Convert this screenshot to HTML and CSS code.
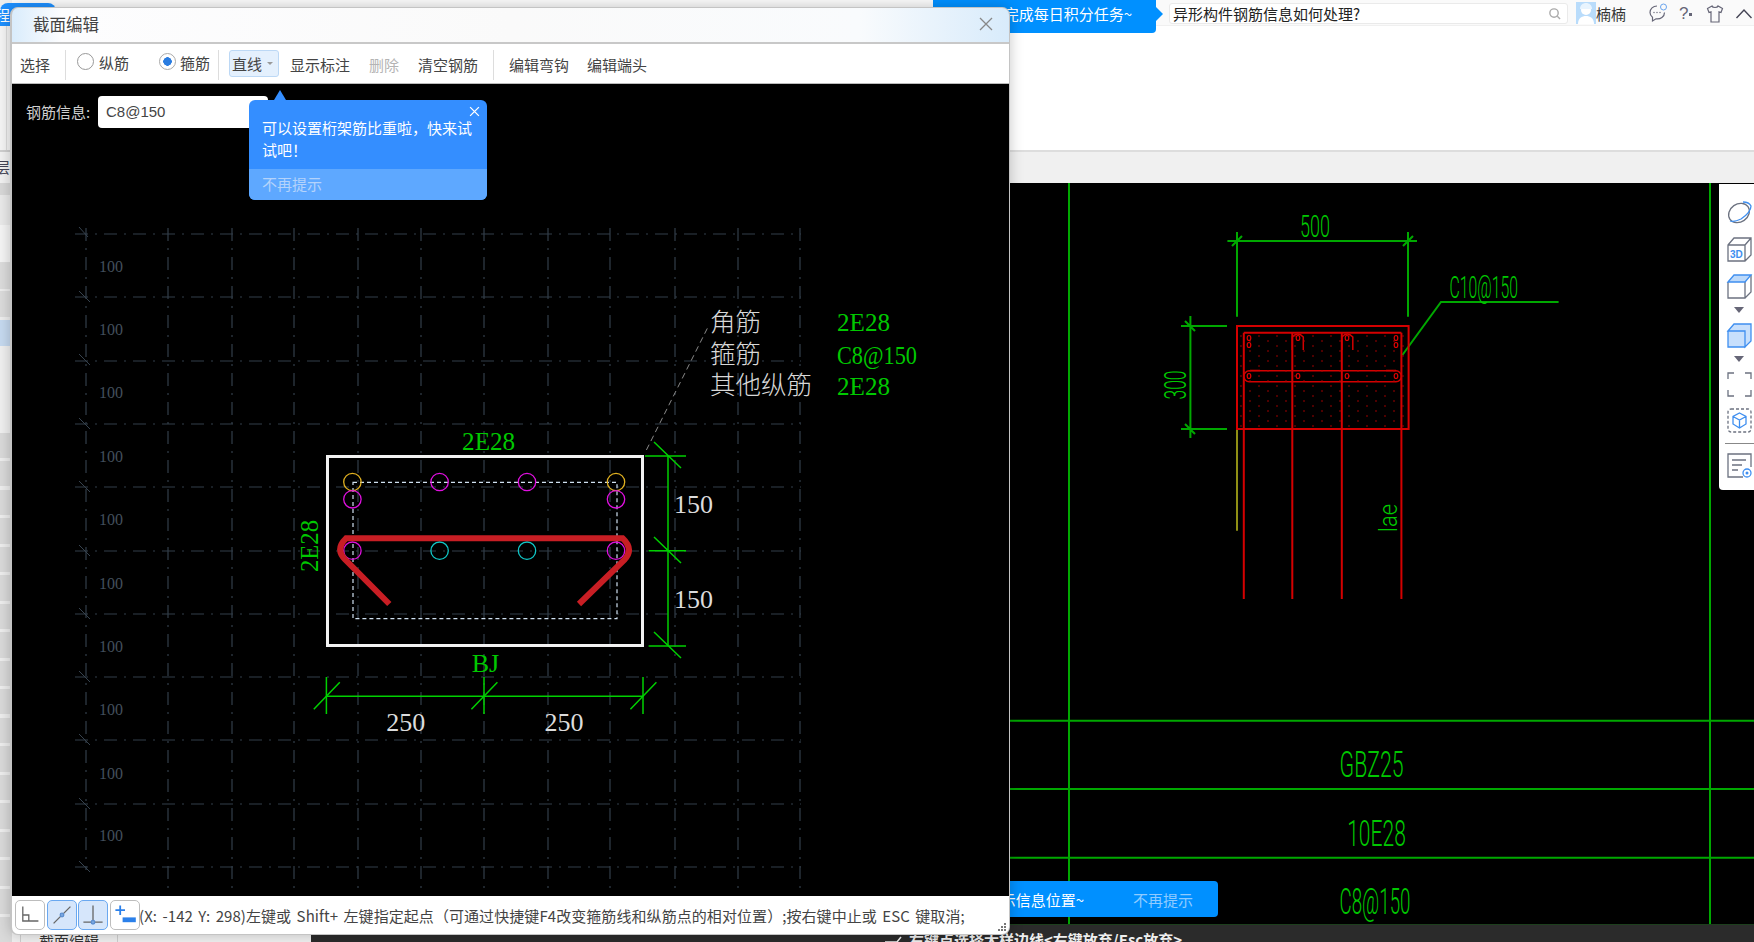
FILE: index.html
```html
<!DOCTYPE html>
<html lang="zh-CN">
<head>
<meta charset="utf-8">
<title>截面编辑</title>
<link rel="stylesheet" href="styles.css">
</head>
<body>
<div class="app">
  <aside class="side">
    <div class="side-top"></div>
    <div class="side-tab"><span>程</span></div>
    <div class="side-a"></div>
    <div class="side-b"><span>层</span></div>
    <div class="side-c"></div>
    <div class="side-d"></div>
    <div class="side-e"></div>
    <div class="side-f"></div>
    <div class="side-sel"></div>
    <div class="side-g"></div>
    <div class="side-rows"></div>
  </aside>

  <main class="main">
    <header class="top">
      <div class="top-row">
        <div class="promo"><span>请您及时完成每日积分任务~</span></div>
        <div class="search">
          <span>异形构件钢筋信息如何处理?</span>
          <svg class="search-ico" viewBox="0 0 14 14"><circle cx="6.500" cy="6.500" r="4.500"/><path d="M10 10l3 3"/></svg>
        </div>
        <svg class="avatar" viewBox="0 0 20 22"><rect width="20" height="22" fill="#b9dcfb"/><circle cx="10" cy="8" r="5" fill="#fff"/><path d="M2 22c0-6 4-8 8-8s8 2 8 8z" fill="#fff"/><path d="M4 7c0-4 3-6 6-6s6 2 6 6z" fill="#e8f4fe"/></svg>
        <span class="user">楠楠</span>
        <svg class="t-ico chat" viewBox="0 0 20 20"><path d="M9 3c-4 0-7 3-7 6.500 0 2 1 3.500 2.500 4.700V18l3.500-2.200c4.500.6 8.500-2 8.500-6.300"/><circle cx="6" cy="9.500" r=".7"/><circle cx="9" cy="9.500" r=".7"/><circle cx="12" cy="9.500" r=".7"/><circle class="chat-dot" cx="15.500" cy="4" r="3"/></svg>
        <span class="help">?</span><span class="help-caret"></span>
        <svg class="t-ico shirt" viewBox="0 0 18 20"><path d="M6 2L1.500 4.500 3 8.500l2-.7V18h8V7.800l2 .7 1.500-4L12 2c-.5 2-5.500 2-6 0z"/></svg>
        <svg class="t-ico chev" viewBox="0 0 18 12"><path d="M1.500 10L9 2l7.500 8"/></svg>
      </div>
    </header>
    <div class="ribbon"></div>

    <section class="cad">
      <svg class="cad-svg" viewBox="12 183 1742 741" width="1742" height="741">
        <g class="g-line">
          <path d="M1069 183V924M1710 183V924M1009 720.700H1754M1009 789H1754M1009 857.700H1754"/>
          <path d="M1227.400 241H1417M1237 232V316.700M1408 232V316.700M1232 246l10-10M1403 246l10-10"/>
          <path d="M1190.400 316V438M1181 326H1227M1181 429H1227M1185 321l10 10M1185 424l10 10"/>
          <path d="M1402.400 355L1441 302H1558.600"/>
        </g>
        <path class="g-yellow" d="M1237 429V530.700"/>
        <g class="g-red">
          <rect x="1237" y="326" width="171.600" height="103"/>
          <path d="M1243.800 332.700H1401.400M1243.800 332.700V599M1292.300 332.700V599M1341.800 332.700V599M1401.400 332.700V599"/>
          <rect class="thin" x="1243.800" y="370.800" width="157.600" height="11" rx="5.500"/>
          <path class="thin" d="M1292.300 350V337q5.500-6 11 0V350M1341.800 350V337q5.500-6 11 0V350M1250 370.500H1260M1386 370.500H1396"/>
        </g>
        <rect class="g-dots" x="1238" y="333" width="170" height="96"/>
        <g class="g-bars">
          <ellipse cx="1249" cy="338" rx="1.800" ry="2.500"/><ellipse cx="1249" cy="345" rx="1.800" ry="2.500"/>
          <ellipse cx="1298" cy="338" rx="1.800" ry="2.500"/><ellipse cx="1347" cy="338" rx="1.800" ry="2.500"/>
          <ellipse cx="1396" cy="338" rx="1.800" ry="2.500"/><ellipse cx="1396" cy="345" rx="1.800" ry="2.500"/>
          <ellipse cx="1249" cy="376" rx="1.800" ry="2.500"/><ellipse cx="1298" cy="376" rx="1.800" ry="2.500"/>
          <ellipse cx="1347" cy="376" rx="1.800" ry="2.500"/><ellipse cx="1396" cy="376" rx="1.800" ry="2.500"/>
        </g>
        <defs>
          <pattern id="dots" width="18" height="10" patternUnits="userSpaceOnUse" x="1238" y="333">
            <circle cx="3" cy="3" r=".8" fill="#b00000"/><circle cx="12" cy="8" r=".8" fill="#b00000"/>
          </pattern>
        </defs>
        <g class="g-text">
          <text x="1315" y="237" text-anchor="middle" textLength="30" lengthAdjust="spacingAndGlyphs">500</text>
          <text x="1449.500" y="298" textLength="68.500" lengthAdjust="spacingAndGlyphs">C10@150</text>
          <text transform="rotate(-90 1186 385)" x="1186" y="385" text-anchor="middle" textLength="29" lengthAdjust="spacingAndGlyphs">300</text>
          <text class="small" transform="rotate(-90 1397 518)" x="1397" y="518" text-anchor="middle" textLength="28" lengthAdjust="spacingAndGlyphs">lae</text>
          <text class="big" x="1371.600" y="777" text-anchor="middle" textLength="64" lengthAdjust="spacingAndGlyphs">GBZ25</text>
          <text class="big" x="1376.500" y="846" text-anchor="middle" textLength="58.600" lengthAdjust="spacingAndGlyphs">10E28</text>
          <text class="big" x="1375" y="914" text-anchor="middle" textLength="71" lengthAdjust="spacingAndGlyphs">C8@150</text>
        </g>
      </svg>

      <div class="blue-tip">
        <span class="tip-msg">请确认图示信息位置~</span>
        <span class="tip-off">不再提示</span>
      </div>

      <nav class="tools">
        <svg class="tool" viewBox="0 0 25 25"><ellipse class="tg" cx="12" cy="13" rx="11" ry="9" transform="rotate(-35 12 13)"/><path class="tb-s" d="M16 2c4 0 7 2 8 4 0 4-4 9-10 13-4 2-8 3-11 2"/></svg>
        <svg class="tool mt12" viewBox="0 0 25 25"><path class="tg" d="M1 8L7 1H24V18L18 24H1zM1 8H18V24M18 8L24 1"/><text class="td" x="3" y="21">3D</text></svg>
        <svg class="tool mt12" viewBox="0 0 25 25"><path class="tg" d="M1 8V24H18V8M18 24L24 18V1"/><path class="tb-s tb-f" d="M1 8L7 1H24L18 8z"/></svg>
        <span class="tri"></span>
        <svg class="tool" viewBox="0 0 25 25"><path class="tb-s tb-f2" d="M1 8V24H18V8zM1 8L7 1H24V18L18 24V8z"/></svg>
        <span class="tri"></span>
        <svg class="tool" viewBox="0 0 25 25"><path class="tg" d="M1 7V1H7M18 1H24V7M24 18V24H18M7 24H1V18"/></svg>
        <svg class="tool mt11" viewBox="0 0 25 25"><rect class="tg dash" x="1" y="1" width="23" height="23" rx="3"/><path class="tb-s" d="M12.500 5L19 8.500V16L12.500 20 6 16V8.500zM6 8.500L12.500 12 19 8.500M12.500 12V20"/></svg>
        <span class="tool-sep"></span>
        <svg class="tool" viewBox="0 0 25 25"><path class="tg" d="M16 24H1V1H24V14M5 7H19M5 12H15M5 17H11"/><circle class="tb-s" cx="20" cy="20" r="4"/><circle class="tb-d" cx="20" cy="20" r="1.500"/></svg>
      </nav>
    </section>

    <footer class="cmd">
      <div class="cmd-left"><span class="cmd-tab">截面编辑</span></div>
      <div class="cmd-dark">
        <svg class="cmd-ico" viewBox="0 0 20 10"><path d="M1 8H13L17 3"/></svg>
        <span>右键点选择大样边线&lt;右键放弃/Esc放弃&gt;</span>
      </div>
    </footer>
  </main>
</div>

<div class="dialog">
  <div class="d-title">
    <span>截面编辑</span>
    <svg class="d-close" viewBox="0 0 14 14"><path d="M1 1l12 12M13 1L1 13"/></svg>
  </div>
  <div class="d-tools">
    <span class="tb">选择</span>
    <span class="sep s15"></span>
    <span class="radio l11"></span><span class="tb l5">纵筋</span>
    <span class="radio on l30"></span><span class="tb l4">箍筋</span>
    <span class="sep s8"></span>
    <span class="combo"><span>直线</span><i></i></span>
    <span class="tb l11">显示标注</span>
    <span class="tb off l19">删除</span>
    <span class="tb l19">清空钢筋</span>
    <span class="sep s15"></span>
    <span class="tb l15">编辑弯钩</span>
    <span class="tb l18">编辑端头</span>
  </div>
  <div class="d-canvas">
    <svg class="cad-svg" viewBox="12 84 996 813" width="996" height="813">
      <g class="grid">
        <path d="M75 234H801M75 297H801M75 361H801M75 424H801M75 487H801M75 551H801M75 614H801M75 677H801M75 740H801M75 804H801M75 867H801"/>
        <path d="M86 228V870M168 228V893M232 228V893M294 228V893M358 228V893M421 228V893M484 228V893M548 228V893M610 228V893M675 228V893M738 228V893M800 228V893"/>
      </g>
      <path class="ticks" d="M79 227l9 10M79 291l11 11M79 354l11 11M79 418l11 11M79 481l11 11M79 545l11 11M79 608l11 11M79 671l11 11M79 734l11 11M79 798l11 11M79 861l11 11"/>
      <g class="lab100">
        <text x="99" y="272">100</text><text x="99" y="335">100</text><text x="99" y="398">100</text><text x="99" y="462">100</text><text x="99" y="525">100</text>
        <text x="99" y="589">100</text><text x="99" y="652">100</text><text x="99" y="715">100</text><text x="99" y="779">100</text><text x="99" y="841">100</text>
      </g>
      <path class="leader" d="M646.400 450L709 325"/>
      <rect class="sec" x="327.500" y="456.500" width="315" height="189"/>
      <rect class="inner" x="353" y="482.300" width="264" height="136.400"/>
      <g class="bar-y"><circle cx="352.400" cy="482" r="8.700"/><circle cx="616" cy="482" r="8.700"/></g>
      <g class="bar-m">
        <circle cx="439.600" cy="482" r="8.700"/><circle cx="527" cy="482" r="8.700"/>
        <circle cx="352.400" cy="499.300" r="8.700"/><circle cx="616" cy="499.300" r="8.700"/>
        <circle cx="352.400" cy="550.700" r="8.700"/><circle cx="616" cy="550.700" r="8.700"/>
      </g>
      <g class="bar-c"><circle cx="439.600" cy="550.700" r="8.700"/><circle cx="527" cy="550.700" r="8.700"/></g>
      <path class="hoop" d="M389.300 604L345 559.300Q335 549 346 538.300H622.600Q634 549 624.800 559.300L579 604"/>
      <g class="dim">
        <path d="M668 456V646M645 456H686M648.600 550.700H686M648.600 646H686"/>
        <path d="M654 442l27 26M654 537l27 26M654 632l27 26"/>
        <path d="M326.400 696.300H643M326.400 677V714M484 677V714M643 677V714"/>
        <path d="M313.800 709.300l26-27M471.400 709.300l26-27M630.400 709.300l26-27"/>
      </g>
      <g class="txt-w">
        <text x="693.500" y="513" text-anchor="middle">150</text>
        <text x="693.500" y="608" text-anchor="middle">150</text>
        <text x="405.800" y="731" text-anchor="middle">250</text>
        <text x="564" y="731" text-anchor="middle">250</text>
      </g>
      <g class="txt-g">
        <text x="488.600" y="450" text-anchor="middle" textLength="53" lengthAdjust="spacingAndGlyphs">2E28</text>
        <text x="485.500" y="672" text-anchor="middle">BJ</text>
        <text transform="rotate(-90 318 546)" x="318" y="546" text-anchor="middle" textLength="52" lengthAdjust="spacingAndGlyphs">2E28</text>
        <text x="837" y="331" textLength="53" lengthAdjust="spacingAndGlyphs">2E28</text>
        <text x="837" y="364" textLength="80" lengthAdjust="spacingAndGlyphs">C8@150</text>
        <text x="837" y="395" textLength="53" lengthAdjust="spacingAndGlyphs">2E28</text>
      </g>
      <g class="txt-cn">
        <text x="710" y="331">角筋</text>
        <text x="710" y="363">箍筋</text>
        <text x="710" y="394">其他纵筋</text>
      </g>
    </svg>
    <div class="rebar-info">
      <label class="ri-label">钢筋信息:</label>
      <span class="ri-input">C8@150</span>
    </div>
    <div class="pop">
      <svg class="pop-x" viewBox="0 0 10 10"><path d="M1 1l8 8M9 1L1 9"/></svg>
      <p>可以设置桁架筋比重啦，快来试试吧！</p>
      <div class="pop-foot">不再提示</div>
    </div>
  </div>
  <div class="d-status">
    <button class="sb"><svg viewBox="0 0 20 20"><path d="M4 3V15H17M4 10H9V15"/></svg></button>
    <button class="sb act"><svg viewBox="0 0 20 20"><path d="M3 17L17 3"/><circle cx="10" cy="10" r="1.500"/></svg></button>
    <button class="sb act"><svg viewBox="0 0 20 20"><path d="M10 2V16M2 16H18"/><circle cx="10" cy="16" r="1.500"/></svg></button>
    <button class="sb"><svg viewBox="0 0 20 20"><path class="plus" d="M2 6H10M6 2V10"/><rect class="minus" x="8" y="12" width="11" height="4"/></svg></button>
    <span class="st-text">(X: -142 Y: 298)左键或 Shift+ 左键指定起点（可通过快捷键F4改变箍筋线和纵筋点的相对位置）;按右键中止或 ESC 键取消;</span>
    <svg class="grip" viewBox="0 0 10 10"><path d="M7 1h2v2H7zM4 4h2v2H4zM7 4h2v2H7zM1 7h2v2H1zM4 7h2v2H4zM7 7h2v2H7z"/></svg>
  </div>
</div>
</body>
</html>
```

FILE: styles.css
```css
* { box-sizing: border-box; }
html, body { margin: 0; padding: 0; }
body {
  width: 1754px;
  height: 942px;
  overflow: hidden;
  position: relative;
  background: #fff;
  font-family: "Noto Sans CJK SC", "Liberation Sans", sans-serif;
  font-size: 15px;
  color: #333;
}

.app { display: flex; width: 1754px; height: 942px; }

/* left strip */
.side { width: 12px; flex: none; display: flex; flex-direction: column; position: relative; z-index: 1; background: #eee; font-size: 15px; }
.side-top { height: 3px; }
.side-tab { height: 23px; width: 56px; background: #1e90ff; border-radius: 8px 8px 0 0; color: #fff; line-height: 23px; }
.side-tab span { margin-left: -5px; }
.side-a { height: 124px; background: linear-gradient(to right, #f5f5f5 0 6px, #dcdcdc 6px 7px, #f5f5f5 7px); }
.side-b { height: 33px; background: #f2f2f2; border-top: 2px solid #cfcfcf; line-height: 30px; color: #445; overflow: hidden; }
.side-b span { margin-left: -5px; }
.side-c { height: 12px; background: #d8d8d8; }
.side-d { height: 30px; background: #eaeaea; }
.side-e { height: 38px; background: #f5f5f5; border-bottom: 1px solid #ddd; }
.side-f { height: 57px; background: repeating-linear-gradient(to bottom, #dcdcdc 0 26px, #eeeeee 26px 28.500px); }
.side-sel { height: 26px; background: #c6daf0; }
.side-g { height: 87px; background: #f0f0f0; }
.side-rows { flex: 1; background: repeating-linear-gradient(to bottom, #dadada 0 25px, #eeeeee 25px 28.500px); }

/* main column */
.main { flex: 1; display: flex; flex-direction: column; min-width: 0; }
.top { height: 150px; background: #fff; }
.top-row { height: 26px; padding-left: 921px; display: flex; align-items: flex-start; border-bottom: 1px solid #f0f0f0; background: #fafafa; }
.ribbon { height: 33px; background: #f0f0f0; border-top: 2px solid #ddd; }

.promo { position: relative; width: 223px; height: 33px; flex: none; background: #0090ff; color: #fff; text-align: right; padding-right: 24px; line-height: 28px; white-space: nowrap; overflow: visible; border-radius: 0 0 4px 0; }
.promo::after { content: ""; position: absolute; right: -7px; top: 7px; border-left: 7px solid #0090ff; border-top: 7px solid transparent; border-bottom: 7px solid transparent; }

.search { width: 399px; height: 21px; margin: 3px 0 0 13px; flex: none; border: 1px solid #eaeaea; border-radius: 3px; background: #fff; padding: 0 6px 0 3px; display: flex; align-items: center; justify-content: space-between; color: #222; line-height: 19px; font-size: 15px; }
.search-ico { width: 13px; height: 13px; fill: none; stroke: #aaa; stroke-width: 1.500; }
.avatar { width: 20px; height: 22px; margin: 2px 0 0 8px; flex: none; }
.user { line-height: 28px; width: 32px; font-size: 15px; color: #333; flex: none; }
.t-ico { flex: none; fill: none; stroke: #667; stroke-width: 1.200; }
.chat { width: 20px; height: 20px; margin: 3px 0 0 20px; }
.chat circle { fill: #667; stroke: none; }
.chat .chat-dot { fill: none; stroke: #6aa5ee; stroke-width: 1; }
.help { margin-left: 11px; line-height: 27px; font-size: 17px; font-family: "Liberation Sans", sans-serif; color: #667; width: 9px; flex: none; }
.help-caret { width: 3px; height: 3px; background: #667; margin: 13px 0 0 1px; flex: none; }
.shirt { width: 18px; height: 20px; margin: 4px 0 0 14px; }
.chev { width: 18px; height: 12px; margin: 8px 0 0 11px; stroke: #445; stroke-width: 1.400; }

.cad { height: 741px; background: #000; position: relative; overflow: hidden; }
.cad-svg { display: block; }
.g-line { fill: none; stroke: #00a800; stroke-width: 2; }
.g-yellow { fill: none; stroke: #8f8f14; stroke-width: 2; }
.g-red { fill: none; stroke: #d40000; stroke-width: 2; }
.g-red .thin { stroke-width: 1.500; }
.g-dots { fill: url(#dots); }
.g-bars { fill: none; stroke: #e00000; stroke-width: 1.200; }
.g-text { font-family: Roboto, "Liberation Sans", sans-serif; font-weight: 300; font-size: 31px; fill: #00c800; }
.g-text .small { font-size: 26px; }
.g-text .big { font-size: 36px; }

.blue-tip { position: absolute; left: 700px; top: 698px; width: 506px; height: 36px; background: #0090ff; border-radius: 4px; display: flex; align-items: center; justify-content: flex-end; color: #fff; white-space: nowrap; padding-right: 25px; }
.tip-off { margin-left: 49px; color: #8fcbff; }

.tools { position: absolute; right: 0; top: 1px; width: 35px; height: 306px; background: #fff; border-radius: 0 0 0 4px; padding: 16px 0 0 8px; display: flex; flex-direction: column; align-items: flex-start; }
.tool { width: 25px; height: 25px; flex: none; overflow: visible; }
.mt12 { margin-top: 12px; }
.mt11 { margin-top: 11px; }
.tg { fill: none; stroke: #6c7280; stroke-width: 1.300; }
.tg.dash { stroke-dasharray: 3 2; }
.tb-s { fill: none; stroke: #3f8ff0; stroke-width: 1.300; }
.tb-f { fill: #bcd9fa; }
.tb-f2 { fill: #c7dffc; }
.tb-d { fill: #3f8ff0; }
.td { font: bold 10px "Liberation Sans", sans-serif; fill: #3f8ff0; }
.tri { width: 0; height: 0; margin: 8px 0 10px 7px; border-top: 6px solid #667; border-left: 5px solid transparent; border-right: 5px solid transparent; flex: none; }
.tool-sep { width: 29px; height: 1px; background: #888; margin: 10px 0 9px -2px; flex: none; }

.cmd { height: 18px; display: flex; overflow: hidden; }
.cmd-left { width: 299px; background: #f0f0f0; padding: 8px 0 0 8px; flex: none; }
.cmd-tab { display: block; width: 98px; height: 18px; border: 1px solid #cfcfcf; border-width: 0 1px; text-align: center; line-height: 18px; color: #333; overflow: hidden; }
.cmd-dark { flex: 1; background: #2b2b2b; border-top: 1px solid #1d3f1d; padding: 6px 0 0 573px; color: #eee; font-weight: 700; display: flex; gap: 5px; line-height: 18px; font-size: 15px; }
.cmd-ico { width: 20px; height: 10px; fill: none; stroke: #eee; stroke-width: 1.500; flex: none; margin-top: 3px; }

/* floating dialog */
.dialog { position: absolute; left: 10px; top: 7px; width: 1000px; height: 928px; z-index: 2; display: flex; flex-direction: column; background: #c8c8c8; border: 1px solid #c4c4c4; border-left-width: 2px; border-radius: 8px; box-shadow: 0 0 14px rgba(0, 0, 0, .22); overflow: hidden; }
.d-title { height: 34px; flex: none; background: linear-gradient(to right, #d9ecfc 0, #fdfdfe 5%, #fafafa 50%, #f9fbfd 85%, #d8ebfb 100%); display: flex; align-items: center; justify-content: space-between; padding: 0 16px 2px 21px; font-size: 16.500px; color: #444; }
.d-close { width: 14px; height: 14px; fill: none; stroke: #888; stroke-width: 1.300; }
.d-tools { height: 40px; flex: none; margin-top: 2px; background: #fff; display: flex; align-items: center; padding: 2px 0 0 8px; border-bottom: 1px solid #bbb; }
.tb { flex: none; line-height: 20px; color: #444; }
.tb.off { color: #b4b4b4; }
.sep { width: 1px; height: 30px; background: #ddd; flex: none; }
.s15 { margin-left: 15px; }
.s8 { margin-left: 8px; }
.l4 { margin-left: 4px; position: relative; top: -2px; }
.l5 { margin-left: 5px; position: relative; top: -2px; }
.l11 { margin-left: 11px; }
.l15 { margin-left: 15px; }
.l18 { margin-left: 18px; }
.l19 { margin-left: 19px; }
.l30 { margin-left: 30px; }
.radio { width: 17px; height: 17px; border-radius: 50%; border: 1px solid #999; background: #fff; flex: none; display: block; position: relative; top: -3px; }
.radio.on { border-color: #aaa; background: radial-gradient(circle, #2a7ce0 0 4px, #fff 4.500px); }
.combo { width: 50px; height: 27px; margin: -2px 0 0 10px; flex: none; background: #e4f0fd; border: 1px solid #bcd8f5; border-radius: 3px; display: flex; align-items: center; padding-left: 2px; color: #444; }
.combo i { width: 0; height: 0; margin-left: 5px; border-top: 3px solid #999; border-left: 3px solid transparent; border-right: 3px solid transparent; }

.d-canvas { flex: 1; background: #000; position: relative; overflow: hidden; }
.grid { fill: none; stroke: #333e4a; stroke-width: 1.200; stroke-dasharray: 13 7 2 7; }
.ticks { fill: none; stroke: #37434f; stroke-width: 1; }
.lab100 { font: 16px "Liberation Serif", serif; fill: #434f5c; }
.leader { fill: none; stroke: #8a8a8a; stroke-width: 1; stroke-dasharray: 6 4; }
.sec { fill: none; stroke: #f2f2f2; stroke-width: 3; }
.inner { fill: none; stroke: #cfe0f0; stroke-width: 1.200; stroke-dasharray: 4 3; }
.bar-y circle { fill: none; stroke: #e0b020; stroke-width: 1.300; }
.bar-m circle { fill: none; stroke: #e010e0; stroke-width: 1.300; }
.bar-c circle { fill: none; stroke: #10c8c8; stroke-width: 1.300; }
.hoop { fill: none; stroke: #c81e24; stroke-width: 6; }
.dim { fill: none; stroke: #00d000; stroke-width: 1.500; }
.txt-w { font: 26px "Liberation Serif", serif; fill: #dcdcdc; }
.txt-g { font: 26px "Liberation Serif", serif; fill: #00c800; }
.txt-cn { font-family: "Noto Sans CJK SC", sans-serif; font-size: 25.500px; font-weight: 300; fill: #d8d8d8; }

.rebar-info { position: absolute; left: 14px; top: 12px; display: flex; align-items: center; gap: 8px; color: #cfcfcf; }
.ri-label { width: 64px; white-space: nowrap; margin-top: -2px; }
.ri-input { width: 170px; height: 32px; background: #fff; border-radius: 4px; color: #444; line-height: 32px; padding-left: 8px; font-family: "Liberation Sans", sans-serif; font-size: 15px; }

.pop { position: absolute; left: 237px; top: 16px; width: 238px; height: 100px; background: #348eff; border-radius: 6px; color: #fff; }
.pop::before { content: ""; position: absolute; left: 25px; top: -10px; border-bottom: 10px solid #348eff; border-left: 6px solid transparent; border-right: 6px solid transparent; }
.pop p { margin: 17px 0 0 13px; width: 216px; font-size: 15px; line-height: 22px; height: 47px; }
.pop-x { position: absolute; right: 7px; top: 6px; width: 11px; height: 11px; fill: none; stroke: #fff; stroke-width: 1.200; }
.pop-foot { position: absolute; left: 0; right: 0; bottom: 0; height: 31px; background: #5ea8ff; border-radius: 0 0 6px 6px; padding-left: 13px; line-height: 30px; color: #b4d3fb; }

.d-status { height: 38px; flex: none; background: #fff; display: flex; align-items: center; padding: 0 0 0 3px; gap: 1.500px; position: relative; }
.sb { width: 30px; height: 30px; padding: 2px; border: 1px solid #bdbdbd; border-radius: 5px; background: #fff; flex: none; }
.sb svg { display: block; width: 24px; height: 24px; fill: none; stroke: #666; stroke-width: 1.100; }
.sb circle { fill: #7aa7e0; stroke: #5d8fd0; }
.sb.act { background: #d6e6fb; border-color: #6aa8f0; }
.sb .plus { stroke: #2b80ea; stroke-width: 1.500; }
.sb .minus { fill: #2b80ea; stroke: none; }
.st-text { margin-left: -2px; color: #444; font-size: 15px; letter-spacing: .07px; word-spacing: 2px; white-space: nowrap; }
.grip { position: absolute; right: 2px; bottom: 2px; width: 10px; height: 10px; fill: #777; }
```
